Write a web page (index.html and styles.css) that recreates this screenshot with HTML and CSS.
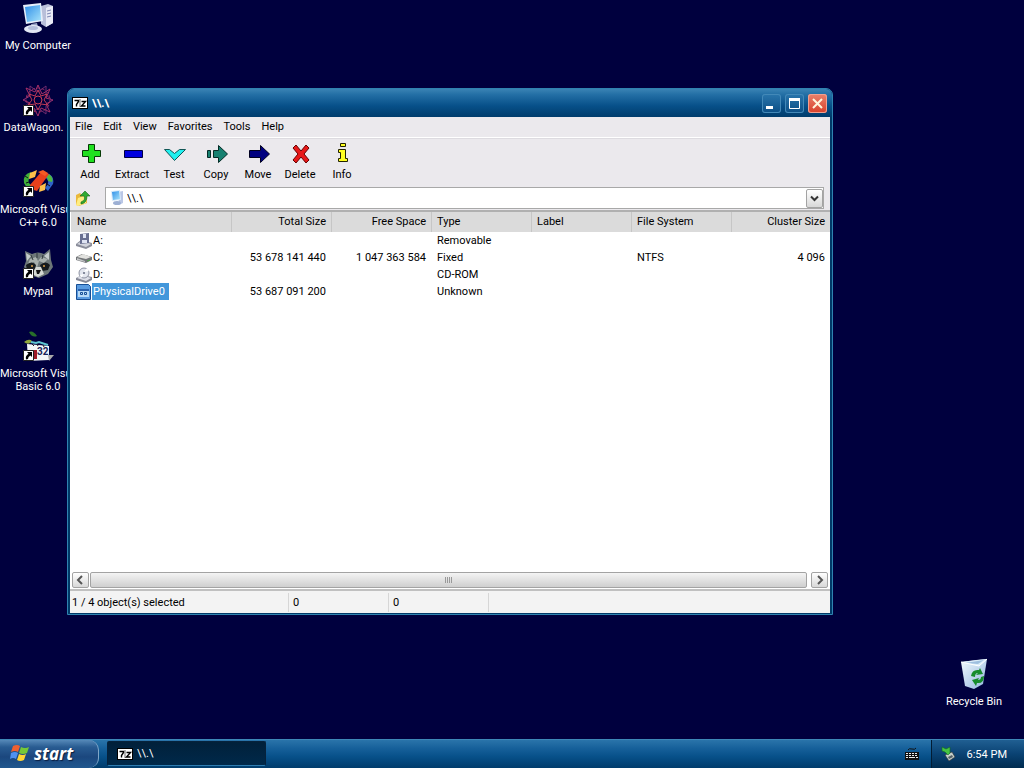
FILE: index.html
```html
<!DOCTYPE html>
<html lang="en">

<head>
    <meta charset="UTF-8">
    <meta name="viewport" content="width=device-width, initial-scale=1.0">
    <title>Desktop</title>
    <link rel="stylesheet" href="styles.css">
</head>

<body>
    <svg class="defs" width="0" height="0" aria-hidden="true">
        <defs>
            <linearGradient id="screen" x1="0" y1="0" x2="1" y2="1">
                <stop offset="0" stop-color="#2f8fe8" />
                <stop offset="1" stop-color="#a8e4fb" />
            </linearGradient>
            <linearGradient id="bin" x1="0" y1="0" x2="1" y2="1">
                <stop offset="0" stop-color="#f4fbff" />
                <stop offset="1" stop-color="#8fb4dc" />
            </linearGradient>
            <symbol id="shortcut" viewBox="0 0 11 11">
                <path d="M.5 .5h10v10h-10z" fill="#fff" stroke="#222" />
                <path d="M4 2h5v5L7.400 5.500Q5 6.500 5 9L3 9.500Q2 6 5.500 3.800z" fill="#000" />
            </symbol>
            <symbol id="seven-zip" viewBox="0 0 16 12">
                <path d="M0 0h16v12H0z" fill="#000" />
                <path d="M1 1h14v10H1z" fill="#fff" />
                <path d="M2.500 3.500h4v1l-2 3v2M9.500 4.500h4L9.500 9h4" fill="none" stroke="#000" stroke-width="1.400" />
                <path d="M8 2v8" stroke="#000" stroke-width=".6" />
            </symbol>
        </defs>
    </svg>

    <main class="desktop">
        <a href="#computer" class="shortcut my-computer">
            <svg width="32" height="32" viewBox="0 0 32 32" aria-hidden="true">
                <path d="M19 4l7-2 5 2v17l-7 4-5-3z" fill="#b9bfd9" />
                <path d="M26 5l5-1v17l-7 4V6z" fill="#e8eaf6" />
                <path d="M25 9l4-1M25 12l4-1M25 15l4-1" stroke="#7d87b4" />
                <path d="M1 3l18-2 2 18-17 3z" fill="#e6effa" />
                <path d="M3 5l15-2 1 15-14 2z" fill="url(#screen)" />
                <path d="M9 22l6-1 1 4-6 1z" fill="#9aa5c6" />
                <ellipse cx="11" cy="27" rx="9" ry="4" fill="#e3e8f5" />
                <ellipse cx="11" cy="26" rx="5" ry="2" fill="#b3bedb" />
            </svg>
            <span>My Computer</span>
        </a>
        <a href="#datawagon" class="shortcut datawagon">
            <svg width="32" height="32" viewBox="0 0 32 32" aria-hidden="true">
                <g fill="none" stroke="#a83069">
                    <circle cx="16" cy="16" r="4" stroke="#d04058" />
                    <path d="M16 1l4 9 8-5-4 9 7 2-7 4 4 8-9-4-3 8-4-8-8 4 4-9-7-3 7-4-4-8 9 4z" />
                    <path d="M8 2l8 6 8-6 0 9 6 5-6 6 0 8-8-6-8 6V21l-6-5 6-6z" stroke="#702a70" />
                    <path d="M16 6l3 6 6-2-3 6 4 5-7-1-3 6-3-6-7 1 4-5-3-6 6 2z" stroke="#c03a55" />
                    <circle cx="16" cy="16" r="12" stroke="#922c62" stroke-dasharray="3 2" />
                </g>
                <use href="#shortcut" x="1" y="21" width="11" height="11" />
            </svg>
            <span class="label"><span class="cut">DataWagon.</span></span>
        </a>
        <a href="#vc6" class="shortcut visual-cpp">
            <svg width="32" height="32" viewBox="0 0 32 32" aria-hidden="true">
                <path d="M9 6Q0 9 2 17l3 5 4-3Q3 14 11 9z" fill="#3fae3a" />
                <path d="M8 7l7-3-2 7-6 2z" fill="#ffc04a" />
                <path d="M25 7q8 3 6 11l-5 7-3-3q6-6 1-10z" fill="#2f63c8" />
                <path d="M27 8q5 4 3 8l-4-1q0-3-2-4z" fill="#51b83f" />
                <path d="M8 19L20 5l7 3-12 17-7-2z" fill="#e8401c" />
                <path d="M16 6l5-2 5 3-3 3z" fill="#f45b24" />
                <path d="M18 20l6-3-1 7-6 2z" fill="#ffc04a" />
                <path d="M3 10l3 2M28 20l-3-2M4 17l3-1" stroke="#111" />
                <use href="#shortcut" x="1" y="20" width="11" height="11" />
            </svg>
            <span class="label"><span class="cut">Microsoft Visu</span>C++ 6.0</span>
        </a>
        <a href="#mypal" class="shortcut mypal">
            <svg width="32" height="32" viewBox="0 0 32 32" aria-hidden="true">
                <path d="M3 3l7 3q6-3 12 0l6-5 1 11 2 7-5 7-9 4-9-3-6-8 2-6z" fill="#6d7778" />
                <path d="M4 5l5 3-4 5zM27 4l-5 4 5 4z" fill="#c5cccb" />
                <path d="M8 11l6-2 2 4 3-4 7 2-4 4-5-2-2 7-3-6-6 2z" fill="#a8b0ac" />
                <path d="M4 17q6-5 10 0l-2 6-7-1zM18 17q6-5 10 0l-2 5-6 1z" fill="#161b1d" />
                <path d="M14 19h5l3 7-6 3-6-3z" fill="#d4d8d3" />
                <circle cx="10" cy="18" r="1" fill="#dda24c" />
                <circle cx="22" cy="18" r="1" fill="#dda24c" />
                <path d="M14 22h5l-2 4h-2z" fill="#111" />
                <path d="M9 7l2 5M15 5v5M21 7l-1 4" stroke="#313a3d" />
                <use href="#shortcut" x="1" y="20" width="11" height="11" />
            </svg>
            <span>Mypal</span>
        </a>
        <a href="#vb6" class="shortcut visual-basic">
            <svg width="32" height="32" viewBox="0 0 32 32" aria-hidden="true">
                <path d="M7 2q4-2 8 4-5 2-8-4z" fill="#28702a" />
                <path d="M2 12q5-4 8-1-3 5-8 1z" fill="#91a83c" />
                <path d="M5 14l22 2v14l-21 1z" fill="#f4f7f8" />
                <path d="M9 12l5 1 3-1 9 3" fill="none" stroke="#5dc5d1" stroke-width="2" />
                <path d="M10 14l2 2M15 14l1 2M21 15l1 2" stroke="#222" />
                <path d="M11 20h4v9h-4z" fill="#a11b27" />
                <path d="M26 25h6l-5 6z" fill="#aaa" />
                <text x="15" y="25" class="vb-number">32</text>
                <use href="#shortcut" x="1" y="20" width="11" height="11" />
            </svg>
            <span class="label"><span class="cut">Microsoft Visu</span>Basic 6.0</span>
        </a>
        <a href="#bin" class="shortcut recycle-bin">
            <svg width="32" height="32" viewBox="0 0 32 32" aria-hidden="true">
                <path d="M3 4l15-2 11-1-4 25-9 5-9-3z" fill="url(#bin)" />
                <path d="M3 4l8-1 18-2-8 7z" fill="#dceefa" />
                <path d="M7 5l19-3-6 4z" fill="#9fbfdf" />
                <path d="M3 4l18 4 8-7" fill="none" stroke="#fff" />
                <path d="M13 18q1-7 8-6l1-2 3 6-7 1 2-2q-3 0-3 4zM26 18q0 8-7 7l-1 3-4-6 7-2-1 2q3 0 3-3z" fill="#168c2c" />
            </svg>
            <span>Recycle Bin</span>
        </a>

        <section class="window">
            <header class="titlebar">
                <svg width="16" height="12" aria-hidden="true"><use href="#seven-zip" /></svg>
                <h1>\\.\</h1>
                <button class="win-button" aria-label="Minimize">
                    <svg width="19" height="19" viewBox="0 0 19 19"><path d="M4 12h7v3H4z" fill="#fff" /></svg>
                </button>
                <button class="win-button" aria-label="Maximize">
                    <svg width="19" height="19" viewBox="0 0 19 19"><path d="M4.500 5.500h10v9h-10z" fill="none" stroke="#fff" /><path d="M4 4h11v3H4z" fill="#fff" /></svg>
                </button>
                <button class="win-button close" aria-label="Close">
                    <svg width="19" height="19" viewBox="0 0 19 19"><path d="M5 5l9 9M14 5l-9 9" stroke="#fff5dc" stroke-width="2" /></svg>
                </button>
            </header>

            <nav class="menu">
                <button>File</button>
                <button>Edit</button>
                <button>View</button>
                <button>Favorites</button>
                <button>Tools</button>
                <button>Help</button>
            </nav>

            <div class="toolbar">
                <button>
                    <svg width="24" height="24" viewBox="0 0 24 24"><path d="M10.500 3.500h6v6h6v6h-6v6h-6v-6h-6v-6h6z" fill="#1fe01f" stroke="#063806" /></svg>
                    Add
                </button>
                <button>
                    <svg width="24" height="24" viewBox="0 0 24 24"><path d="M4.500 9.500h18v7h-18z" fill="#0000e0" stroke="#000040" /></svg>
                    Extract
                </button>
                <button>
                    <svg width="24" height="24" viewBox="0 0 24 24"><path d="M2.500 8.500h5l5 4 5-4h6l-11 11z" fill="#20f0f0" stroke="#155" /></svg>
                    Test
                </button>
                <button>
                    <svg width="24" height="24" viewBox="0 0 24 24"><path d="M3.500 9.500h3v7h-3zM9.500 9.500h5v-5l9 8.500-9 8.500v-5h-5z" fill="#168070" stroke="#032a25" /></svg>
                    Copy
                </button>
                <button>
                    <svg width="24" height="24" viewBox="0 0 24 24"><path d="M3.500 9.500h11v-5l9 8.500-9 8.500v-5h-11z" fill="#000080" stroke="#000020" /></svg>
                    Move
                </button>
                <button>
                    <svg width="24" height="24" viewBox="0 0 24 24"><path d="M5 7l3-3 5 6 5-6 3 3-5 6 5 6-3 3-5-6-5 6-3-3 5-6z" fill="#e81818" stroke="#600" /></svg>
                    Delete
                </button>
                <button>
                    <svg width="24" height="24" viewBox="0 0 24 24"><path d="M10.500 2.500h5v3h-5zM8.500 8.500h7v9h2v3h-9v-3h2v-6h-2z" fill="#ffff20" stroke="#222200" /></svg>
                    Info
                </button>
            </div>

            <div class="address">
                <button class="up" aria-label="Up one level">
                    <svg width="16" height="16" viewBox="0 0 16 16">
                        <path d="M1 5l4-2 2 2 5-1v9L4 16l-3-1z" fill="#eab93c" />
                        <path d="M1 15l2-7 9-3-1 8-8 3z" fill="#ffed82" />
                        <path d="M6 12q5-2 3-6H5l5-5 5 5h-3q0 7-6 8z" fill="#2faa31" stroke="#14651b" stroke-width=".6" />
                    </svg>
                </button>
                <div class="path">
                    <svg width="16" height="16" viewBox="0 0 16 16" aria-hidden="true">
                        <path d="M9 2l5-1v12l-4 2z" fill="#bac7e6" />
                        <path d="M2 1l9-1 1 10-9 1z" fill="#d9ebfb" />
                        <path d="M3 2l7-1 1 8-7 1z" fill="url(#screen)" />
                        <ellipse cx="8" cy="13" rx="4" ry="2" fill="#9db0d4" />
                    </svg>
                    <input type="text" value="\\.\" aria-label="Address">
                    <button aria-label="Show locations">
                        <svg width="15" height="17" viewBox="0 0 15 17"><path d="M4 6.500l3.500 3.500L11 6.500" fill="none" stroke="#333" stroke-width="2" /></svg>
                    </button>
                </div>
            </div>

            <div class="files">
                <table>
                    <thead>
                        <tr>
                            <th class="name">Name</th>
                            <th class="number">Total Size</th>
                            <th class="number">Free Space</th>
                            <th>Type</th>
                            <th>Label</th>
                            <th>File System</th>
                            <th class="number last">Cluster Size</th>
                        </tr>
                    </thead>
                    <tbody>
                        <tr>
                            <td><div class="drive">
                                <svg width="16" height="16" viewBox="0 0 16 16" aria-hidden="true">
                                    <path d="M0 11l5-4 11 3v3l-6 3-10-3z" fill="#8b8e9b" />
                                    <path d="M1 11l5-3 9 3-5 3z" fill="#d2d4dc" />
                                    <path d="M4 1l9-1v10l-9 1z" fill="#686f91" />
                                    <path d="M7 1h3v4H7zM6 7h5v3H6z" fill="#dfe4f3" />
                                </svg>
                                <span>A:</span>
                            </div></td>
                            <td></td>
                            <td></td>
                            <td>Removable</td>
                            <td></td>
                            <td></td>
                            <td></td>
                        </tr>
                        <tr>
                            <td><div class="drive">
                                <svg width="16" height="16" viewBox="0 0 16 16" aria-hidden="true">
                                    <path d="M0 7l6-3 10 3v3l-6 3-10-3z" fill="#737679" />
                                    <path d="M1 7l6-3 8 3-5 2z" fill="#e2e2df" />
                                    <path d="M1 8l8 3v1l-8-2z" fill="#c7c9ca" />
                                    <path d="M11 11l3-1" stroke="#50a04c" />
                                </svg>
                                <span>C:</span>
                            </div></td>
                            <td class="number">53 678 141 440</td>
                            <td class="number">1 047 363 584</td>
                            <td>Fixed</td>
                            <td></td>
                            <td>NTFS</td>
                            <td class="number">4 096</td>
                        </tr>
                        <tr>
                            <td><div class="drive">
                                <svg width="16" height="16" viewBox="0 0 16 16" aria-hidden="true">
                                    <path d="M0 11l6-3 10 2v3l-6 3-10-3z" fill="#858896" />
                                    <path d="M1 11l5-3 9 3-5 3z" fill="#dddfe8" />
                                    <ellipse cx="8" cy="6" rx="5" ry="5" fill="#e4e7ef" stroke="#8d92a2" />
                                    <path d="M8 5l3-4 2 3zM8 7l-3 4-1-3z" fill="#fff" />
                                    <circle cx="8" cy="6" r="1" fill="#666d80" />
                                </svg>
                                <span>D:</span>
                            </div></td>
                            <td></td>
                            <td></td>
                            <td>CD-ROM</td>
                            <td></td>
                            <td></td>
                            <td></td>
                        </tr>
                        <tr>
                            <td><div class="drive selected">
                                <svg width="16" height="16" viewBox="0 0 16 16" aria-hidden="true">
                                    <path d="M.5 .5h12l2 2v13H.5z" fill="#5a9be0" stroke="#174e95" />
                                    <path d="M2 5h11v8H2z" fill="#b8daf7" />
                                    <path d="M2 5h11v2H2z" fill="#2c62ad" />
                                    <path d="M4.500 8.500h2v2h-2zM8.500 8.500h2v2h-2z" fill="none" stroke="#174e95" />
                                </svg>
                                <span>PhysicalDrive0</span>
                            </div></td>
                            <td class="number">53 687 091 200</td>
                            <td></td>
                            <td>Unknown</td>
                            <td></td>
                            <td></td>
                            <td></td>
                        </tr>
                    </tbody>
                </table>
            </div>

            <div class="scrollbar">
                <button aria-label="Scroll left">
                    <svg width="15" height="14" viewBox="0 0 15 14"><path d="M9 3L5 7l4 4" fill="none" stroke="#555" stroke-width="2" /></svg>
                </button>
                <div class="track">
                    <div class="thumb">
                        <svg width="8" height="6" viewBox="0 0 8 6"><path d="M.5 0v6M2.500 0v6M4.500 0v6M6.500 0v6" stroke="#999" /></svg>
                    </div>
                </div>
                <button aria-label="Scroll right">
                    <svg width="15" height="14" viewBox="0 0 15 14"><path d="M6 3l4 4-4 4" fill="none" stroke="#555" stroke-width="2" /></svg>
                </button>
            </div>

            <footer class="status">
                <span class="selection">1 / 4 object(s) selected</span>
                <span>0</span>
                <span>0</span>
            </footer>
        </section>
    </main>

    <footer class="taskbar">
        <button class="start">
            <svg width="20" height="18" viewBox="0 0 20 18" aria-hidden="true">
                <path d="M3 2q4-2 7 0L8 8Q5 6 1 8z" fill="#f06030" />
                <path d="M11 3q4 2 8 0l-2 6q-4 2-8 0z" fill="#75c837" />
                <path d="M1 9q4-2 7 0l-2 6q-3-2-6 0z" fill="#4f91f0" />
                <path d="M9 10q4 2 7 0l-2 6q-4 2-7 0z" fill="#ffd534" />
            </svg>
            start
        </button>
        <button class="task">
            <svg width="16" height="12" viewBox="0 0 16 12" aria-hidden="true"><use href="#seven-zip" /></svg>
            \\.\
        </button>
        <button class="keyboard" aria-label="Keyboard layout">
            <svg width="14" height="14" viewBox="0 0 14 14">
                <path d="M3 3q1-2 4-1t4-1" fill="none" stroke="#111" />
                <path d="M0 5h14v8H0z" fill="#111" />
                <path d="M1 6.500h12M1 8.500h12" stroke="#eee" stroke-dasharray="2 1" />
                <path d="M1 10.500h2M4 10.500h6M11 10.500h2" stroke="#eee" />
            </svg>
        </button>
        <div class="tray">
            <svg width="16" height="16" viewBox="0 0 16 16" aria-hidden="true">
                <path d="M4 9l7-3 3 5-6 4z" fill="#c5d0cb" stroke="#333" stroke-width=".6" />
                <path d="M7 11l4-2 1 2-4 2z" fill="#536067" />
                <path d="M1 1l4 2 4-2v6l-2 2-3-3-3-1z" fill="#46c343" stroke="#126922" stroke-width=".6" />
            </svg>
            <time>6:54 PM</time>
        </div>
    </footer>
</body>

</html>
```
FILE: styles.css
```css
* {
    box-sizing: border-box;
}

body {
    font-family: Roboto, sans-serif;
    font-size: 11px;
    line-height: 13px;
    margin: 0;
    height: 100vh;
    display: flex;
    flex-direction: column;
    overflow: hidden;
    background-color: #00003e;
    color: #000;
}

button,
input {
    font: inherit;
    color: inherit;
    margin: 0;
    padding: 0;
    border: none;
    background: none;
}

svg {
    display: block;
    flex: none;
}

.defs {
    position: absolute;
}

.desktop {
    flex: 1;
    position: relative;
    min-height: 0;
}

/* desktop icons */
.shortcut {
    position: absolute;
    left: 0;
    width: 76px;
    display: flex;
    flex-direction: column;
    align-items: center;
    gap: 5px;
    color: #fff;
    text-align: center;
    text-decoration: none;
    white-space: nowrap;
}

.label {
    width: 76px;
}

.cut {
    display: block;
    width: 67px;
}

.my-computer {
    top: 2px;
}

.datawagon {
    top: 84px;
}

.visual-cpp {
    top: 166px;
}

.mypal {
    top: 248px;
}

.visual-basic {
    top: 330px;
}

.recycle-bin {
    top: 658px;
    left: auto;
    right: 12px;
}

.vb-number {
    font-size: 10px;
    font-weight: bold;
    fill: #18255a;
}

/* file manager window */
.window {
    position: absolute;
    top: 88px;
    right: 191px;
    bottom: 124px;
    left: 67px;
    display: flex;
    flex-direction: column;
    padding: 0 2px 1px;
    border: 1px solid #2f83b0;
    border-radius: 7px 7px 0 0;
    background-color: #003a68;
    overflow: hidden;
}

.titlebar {
    display: flex;
    align-items: center;
    gap: 4px;
    height: 28px;
    flex: none;
    margin: 0 -2px;
    padding: 0 5px 0 4px;
    background: linear-gradient(#3a83b4, #236fa5 20%, #075089 60%, #003c6c);
    color: #fff;
}

.titlebar h1 {
    flex: 1;
    margin: 0;
    font-size: 11px;
}

.win-button {
    width: 19px;
    height: 19px;
    border-radius: 3px;
    background: linear-gradient(#2a76ac, #0b4e85);
    box-shadow: inset 0 0 0 1px #4389b8;
}

.close {
    background: linear-gradient(#e9826c, #d8402a);
    box-shadow: inset 0 0 0 1px #f0a090;
}

.menu {
    display: flex;
    align-items: center;
    gap: 11px;
    height: 21px;
    flex: none;
    padding: 0 5px 2px;
    border-bottom: 1px solid #fff;
    background-color: #ebe9ed;
}

.toolbar {
    display: flex;
    height: 48px;
    flex: none;
    background-color: #ebe9ed;
    border-top: 1px solid #dddbe0;
}

.toolbar button {
    width: 42px;
    padding: 2px 2px 0 0;
    display: flex;
    flex-direction: column;
    align-items: center;
    gap: 3px;
}

.address {
    display: flex;
    align-items: center;
    gap: 14px;
    height: 24px;
    flex: none;
    padding: 0 6px 0 5px;
    background-color: #ebe9ed;
}

.path {
    flex: 1;
    display: flex;
    align-items: center;
    gap: 2px;
    height: 22px;
    padding: 0 0 0 3px;
    border: 1px solid #a8a8a8;
    background-color: #fff;
}

.path input {
    flex: 1;
    min-width: 0;
    font-size: 11px;
    outline: none;
}

.path button,
.scrollbar button {
    border: 1px solid #a3a3a3;
    border-radius: 2px;
    background: linear-gradient(#fff, #d8d8d8);
}

.files {
    flex: 1;
    min-height: 0;
    padding-left: 1px;
    border-top: 2px solid #b0b0b0;
    background-color: #fff;
}

table {
    width: 100%;
    border-collapse: separate;
    border-spacing: 0;
    table-layout: fixed;
}

th {
    width: 100px;
    height: 20px;
    padding: 0 5px 1px 6px;
    border-right: 1px solid #c6c6c6;
    background-color: #dbdbdb;
    font-weight: normal;
    text-align: left;
}

th.name {
    width: 161px;
}

th.last {
    width: auto;
    border-right: none;
}

td {
    height: 17px;
    padding: 0 6px 0 5px;
    white-space: nowrap;
}

th + th {
    padding-left: 5px;
}

.number {
    text-align: right;
}

th.last,
td:last-child {
    padding-right: 5px;
}

.drive {
    display: flex;
    align-items: center;
}

.drive span {
    padding: 2px 0 2px 1px;
}

.selected span {
    padding-right: 4px;
    background-color: #4297db;
    color: #fff;
}

.scrollbar {
    display: flex;
    gap: 1px;
    height: 18px;
    flex: none;
    padding: 1px 2px 1px 2px;
    background-color: #fff;
}

.scrollbar button {
    width: 17px;
}

.track {
    flex: 1;
    display: flex;
    padding-right: 3px;
}

.thumb {
    flex: 1;
    display: flex;
    align-items: center;
    justify-content: center;
    border: 1px solid #a3a3a3;
    border-radius: 2px;
    background: linear-gradient(#f4f4f4, #cfcfcf);
}

.status {
    display: flex;
    align-items: center;
    height: 24px;
    flex: none;
    padding-top: 1px;
    border-top: 2px solid #c0c0c0;
    background-color: #f3f3f3;
}

.status span {
    width: 100px;
    padding: 3px 5px 3px 4px;
    border-right: 1px solid #d6d6d6;
}

.status .selection {
    width: 219px;
    padding-left: 2px;
}

/* taskbar */
.taskbar {
    display: flex;
    align-items: stretch;
    height: 29px;
    flex: none;
    border-top: 1px solid #3d88b7;
    background: linear-gradient(#2a74aa, #16609a 30%, #075089 60%, #003c6c);
    color: #fff;
}

.start {
    display: flex;
    align-items: center;
    gap: 4px;
    width: 99px;
    padding: 0 0 2px 10px;
    border-right: 1px solid #7fa6c8;
    border-radius: 0 10px 10px 0;
    background: linear-gradient(#5689b8, #295c92 25%, #1b477e 60%, #20578e);
    font-family: "Noto Sans", sans-serif;
    font-size: 17px;
    font-style: italic;
    font-weight: bold;
    text-shadow: 1px 1px 1px #0a1d40;
}

.task {
    display: flex;
    align-items: center;
    gap: 4px;
    width: 159px;
    margin: 1px auto 2px 8px;
    padding-left: 9px;
    border: 1px solid #06223c;
    border-bottom-color: #2f7db0;
    border-radius: 2px;
    background: linear-gradient(#01203a, #00294a);
}

.keyboard {
    padding: 0 12px;
}

.tray {
    display: flex;
    align-items: center;
    gap: 10px;
    padding: 0 17px 0 9px;
    border-left: 1px solid #021c34;
    background: linear-gradient(#205f92, #0a4273 50%, #002c50);
}
```
